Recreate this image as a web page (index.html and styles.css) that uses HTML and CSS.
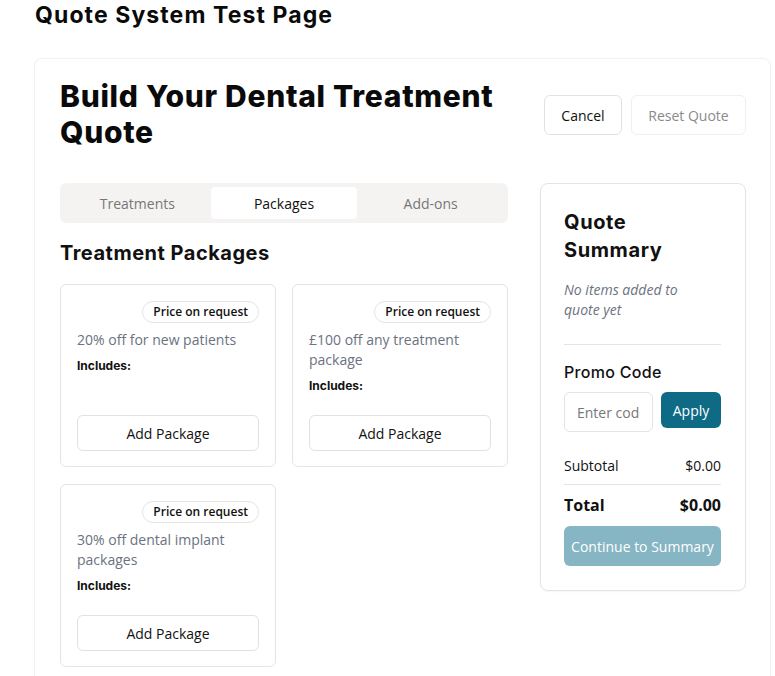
FILE: index.html
```html
<!DOCTYPE html>
<html>
<head>
<meta charset="utf-8">
<link rel="stylesheet" href="styles.css">
</head>
<body>
<h1 class="page-title">Quote System Test Page</h1>
<div class="builder">
  <div class="builder-head">
    <h2 class="builder-title">Build Your Dental Treatment Quote</h2>
    <div class="head-actions">
      <button class="btn btn-cancel">Cancel</button>
      <button class="btn btn-reset">Reset Quote</button>
    </div>
  </div>
  <div class="builder-body">
    <div class="main-col">
      <div class="tabs">
        <div class="tab">Treatments</div>
        <div class="tab active">Packages</div>
        <div class="tab">Add-ons</div>
      </div>
      <h3 class="section-title">Treatment Packages</h3>
      <div class="pkg-grid">
        <div class="pkg">
          <div class="pkg-top"><span class="badge">Price on request</span></div>
          <p class="pkg-desc">20% off for new patients</p>
          <div class="pkg-inc">Includes:</div>
          <div class="pkg-spacer"></div>
          <button class="btn btn-add">Add Package</button>
        </div>
        <div class="pkg">
          <div class="pkg-top"><span class="badge">Price on request</span></div>
          <p class="pkg-desc">£100 off any treatment package</p>
          <div class="pkg-inc">Includes:</div>
          <div class="pkg-spacer"></div>
          <button class="btn btn-add">Add Package</button>
        </div>
        <div class="pkg">
          <div class="pkg-top"><span class="badge">Price on request</span></div>
          <p class="pkg-desc">30% off dental implant packages</p>
          <div class="pkg-inc">Includes:</div>
          <div class="pkg-spacer"></div>
          <button class="btn btn-add">Add Package</button>
        </div>
      </div>
    </div>
    <aside class="summary">
      <h3 class="summary-title">Quote Summary</h3>
      <p class="summary-empty">No items added to quote yet</p>
      <div class="divider"></div>
      <h4 class="promo-title">Promo Code</h4>
      <div class="promo-row">
        <input class="promo-input" type="text" placeholder="Enter code">
        <button class="btn btn-apply">Apply</button>
      </div>
      <div class="line-row subtotal"><span>Subtotal</span><span>$0.00</span></div>
      <div class="divider thin"></div>
      <div class="line-row total"><span>Total</span><span>$0.00</span></div>
      <button class="btn btn-continue">Continue to Summary</button>
    </aside>
  </div>
</div>
</body>
</html>
```

FILE: styles.css
```css
* { box-sizing: border-box; }
html, body { margin: 0; padding: 0; background: #fff; }
body {
  font-family: "Open Sans", "Liberation Sans", sans-serif;
  color: #111;
  overflow: hidden;
  height: 676px;
}
.page-title {
  font-family: Inter, "Noto Sans", sans-serif;
  font-weight: 700;
  font-size: 23px;
  letter-spacing: 1.1px;
  margin: 0;
  padding: 1px 0 0 35px;
  line-height: 29px;
  color: #0a0a0a;
}
.builder {
  margin: 28px 4px 0 34px;
  border: 1px solid #f1f1f1;
  border-radius: 8px 8px 0 0;
  box-shadow: 0 1px 3px rgba(0,0,0,0.03);
  padding: 16px 24px 40px 25px;
  background: #fff;
}
.builder-head {
  display: flex;
  justify-content: space-between;
  align-items: flex-start;
}
.builder-title {
  font-family: Inter, "Noto Sans", sans-serif;
  font-weight: 800;
  font-size: 30px;
  line-height: 36px;
  letter-spacing: 0.7px;
  margin: 3px 0 0;
  width: 450px;
  color: #0a0a0a;
}
.head-actions {
  display: flex;
  gap: 9px;
  margin-top: 20px;
}
.btn {
  font-family: "Open Sans", "Liberation Sans", sans-serif;
  cursor: pointer;
  background: #fff;
}
.btn-cancel, .btn-reset {
  height: 40px;
  border-radius: 6px;
  font-size: 14px;
  padding: 0 16px;
  border: 1px solid #e2e2e2;
  color: #111;
}
.btn-cancel { width: 78px; }
.btn-reset { width: 115px; color: #8a8a8a; border-color: #efefef; }
.builder-body {
  display: flex;
  gap: 32px;
  margin-top: 33px;
  align-items: flex-start;
}
.main-col { width: 448px; }
.tabs {
  display: flex;
  background: #f4f3f1;
  border-radius: 6px;
  padding: 4px;
  height: 40px;
}
.tab {
  flex: 1;
  display: flex;
  align-items: center;
  justify-content: center;
  font-size: 14px;
  color: #777;
  border-radius: 4px;
}
.tab.active { background: #fff; color: #111; }
.section-title {
  font-family: Inter, "Noto Sans", sans-serif;
  font-weight: 700;
  font-size: 20px;
  line-height: 28px;
  letter-spacing: 0.5px;
  margin: 16px 0 17px;
  color: #111;
}
.pkg-grid {
  display: grid;
  grid-template-columns: 216px 216px;
  gap: 17px 16px;
}
.pkg {
  border: 1px solid #e4e4e4;
  border-radius: 6px;
  padding: 16px 16px 15px;
  height: 183px;
  display: flex;
  flex-direction: column;
}
.pkg-top { display: flex; justify-content: flex-end; }
.badge {
  border: 1px solid #e4e4e4;
  border-radius: 11px;
  font-size: 12px;
  font-weight: 600;
  line-height: 20px;
  padding: 0 10px;
  color: #111;
}
.pkg-desc {
  margin: 7px 0 0;
  font-size: 14px;
  line-height: 20px;
  color: #6b7280;
}
.pkg-inc {
  font-family: Inter, "Noto Sans", sans-serif;
  font-weight: 700;
  font-size: 12px;
  line-height: 16px;
  margin-top: 8px;
  color: #111;
}
.pkg-spacer { flex: 1; }
.btn-add {
  height: 36px;
  width: 100%;
  border: 1px solid #e2e2e2;
  border-radius: 6px;
  font-size: 14px;
  color: #111;
}
.summary {
  width: 207px;
  border: 1px solid #e4e4e4;
  border-radius: 8px;
  padding: 24px 24px 24px 23px;
  box-shadow: 0 1px 2px rgba(0,0,0,0.04);
}
.summary-title {
  font-family: Inter, "Noto Sans", sans-serif;
  font-weight: 700;
  font-size: 20px;
  line-height: 28px;
  letter-spacing: 0.6px;
  margin: 0;
  width: 120px;
  color: #111;
}
.summary-empty {
  font-style: italic;
  font-size: 14px;
  line-height: 20px;
  color: #6b7280;
  margin: 16px 0 0;
  width: 135px;
}
.divider { height: 1px; background: #e4e4e4; margin: 24px 0 0; }
.divider.thin { margin: 8px 0 0; }
.promo-title {
  font-family: Inter, "Noto Sans", sans-serif;
  font-weight: 500;
  font-size: 16px;
  line-height: 24px;
  letter-spacing: 0.3px;
  margin: 15px 0 0;
  color: #111;
}
.promo-row { display: flex; gap: 8px; margin-top: 8px; align-items: flex-start; }
.promo-input {
  width: 89px;
  height: 40px;
  border: 1px solid #e4e4e4;
  border-radius: 6px;
  padding: 0 12px;
  font-family: "Open Sans", sans-serif;
  font-size: 14px;
  color: #111;
  outline: none;
}
.promo-input::placeholder { color: #777; }
.btn-apply {
  flex: 1;
  height: 36px;
  border: none;
  border-radius: 6px;
  background: #0e6a85;
  color: #fff;
  font-size: 14px;
}
.line-row {
  display: flex;
  justify-content: space-between;
  align-items: center;
}
.subtotal { margin-top: 24px; font-size: 14px; line-height: 20px; color: #111; }
.total { margin-top: 8px; font-size: 16px; font-weight: 700; line-height: 24px; }
.btn-continue {
  margin-top: 9px;
  width: 100%;
  height: 40px;
  border: none;
  border-radius: 6px;
  background: #86b5c3;
  color: #fff;
  font-size: 14px;
}
```
